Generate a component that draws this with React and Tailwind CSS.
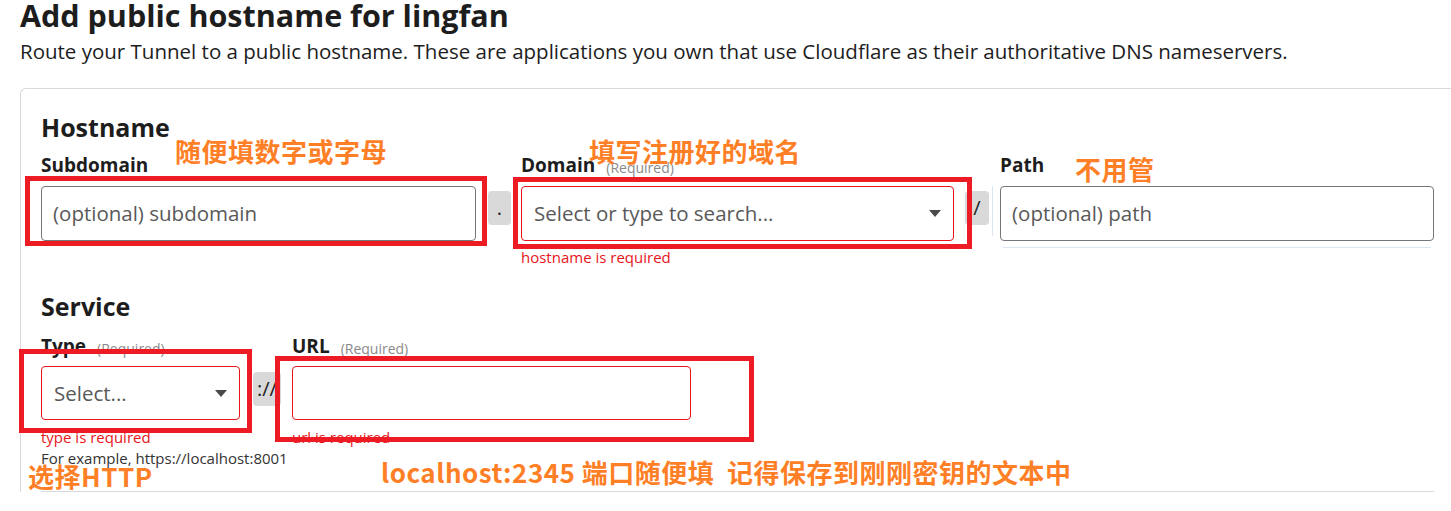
import React from "react";

const Caret = () => (
  <svg width="12" height="7" viewBox="0 0 12 7" className="shrink-0">
    <path d="M0 0h12L6 7z" fill="#4a4a4a" />
  </svg>
);

const Label = ({ children, required }) => (
  <div className="h-[34px] flex items-center gap-[11px]">
    <span className="text-[19px] font-bold text-[#1d1d1d]">{children}</span>
    {required && <span className="text-[14px] text-[#8a8a8a] mt-[4px]">(Required)</span>}
  </div>
);

const Sep = ({ children, w }) => (
  <div className={`${w} h-[34px] mt-[43px] rounded-[4px] bg-[#d9d9d9] flex items-center justify-center text-[20px] text-[#1d1d1d]`}>
    {children}
  </div>
);

const App = () => {
  return (
    <div className="relative w-[1451px] h-[511px] overflow-hidden bg-white text-[#1d1d1d] font-['Open_Sans','Noto_Sans',sans-serif]">
      {/* Page header */}
      <div className="pl-5">
        <h1 className="text-[30.5px] font-bold leading-[30px]">Add public hostname for lingfan</h1>
        <p className="mt-[6px] text-[20.5px] leading-[30px]">
          Route your Tunnel to a public hostname. These are applications you own that use Cloudflare as their authoritative DNS nameservers.
        </p>
      </div>

      {/* Card */}
      <div className="ml-5 mt-[22px] border border-[#d9d9d9] border-r-0 border-b-0 rounded-tl-[6px] pl-5 pr-[17px] pt-[24px]">
        <h2 className="text-[25px] font-bold leading-[28px]">Hostname</h2>
        <div className="mt-[7px] flex items-start">
          <div className="w-[435px]">
            <Label>Subdomain</Label>
            <div className="mt-[4px] h-[55px] rounded-[4px] border border-[#767676] flex items-center pl-[11px] text-[20.5px] text-[#595959]">
              (optional) subdomain
            </div>
          </div>
          <div className="ml-[12px]">
            <Sep w="w-[23px]">.</Sep>
          </div>
          <div className="ml-[10px] w-[433px]">
            <Label required>Domain</Label>
            <div className="mt-[4px] h-[55px] rounded-[4px] border border-[#e8141a] flex items-center justify-between pl-3 pr-[12px] text-[20.5px] text-[#595959]">
              <span>Select or type to search...</span>
              <Caret />
            </div>
            <div className="mt-[6px] text-[15px] leading-[20px] text-[#e8141a]">hostname is required</div>
          </div>
          <div className="ml-[11px]">
            <Sep w="w-[24px]">/</Sep>
          </div>
          <div className="ml-[3px] mt-[38px] w-px h-[50px] bg-[#dbe6f4]" />
          <div className="ml-[7px] w-[434px]">
            <Label>Path</Label>
            <div className="mt-[4px] h-[55px] rounded-[4px] border border-[#767676] flex items-center pl-[11px] text-[20.5px] text-[#595959]">
              (optional) path
            </div>
            <div className="mt-[6px] mx-[3px] h-px bg-[#dbe6f4]" />
          </div>
        </div>

        <h2 className="mt-[25px] text-[25px] font-bold leading-[28px]">Service</h2>
        <div className="mt-[9px] flex items-start">
          <div className="w-[199px]">
            <Label required>Type</Label>
            <div className="mt-[3px] h-[54px] rounded-[4px] border border-[#e8141a] flex items-center justify-between pl-3 pr-[12px] text-[20.5px] text-[#595959]">
              <span>Select...</span>
              <Caret />
            </div>
            <div className="mt-[7px] text-[15px] leading-[20px] text-[#e8141a]">type is required</div>
            <div className="mt-px text-[15px] leading-[20px] text-[#333] whitespace-nowrap">For example, https://localhost:8001</div>
          </div>
          <div className="ml-[13px]">
            <Sep w="w-[28px]">://</Sep>
          </div>
          <div className="ml-[11px] w-[399px]">
            <Label required>URL</Label>
            <div className="mt-[3px] h-[54px] rounded-[4px] border border-[#e8141a]" />
            <div className="mt-[7px] text-[15px] leading-[20px] text-[#e8141a]">url is required</div>
          </div>
        </div>
        <div className="mt-[23px] h-px bg-[#d9d9d9]" />
      </div>

      {/* Annotations drawn over the screenshot */}
      <div className="absolute left-[25px] top-[176px] w-[462px] h-[70px] border-[5px] border-[#ed1c24]" />
      <div className="absolute left-[513px] top-[177px] w-[459px] h-[72px] border-[5px] border-[#ed1c24]" />
      <div className="absolute left-[19px] top-[349px] w-[233px] h-[84px] border-[5px] border-[#ed1c24]" />
      <div className="absolute left-[275px] top-[356px] w-[479px] h-[86px] border-[5px] border-[#ed1c24]" />

      <div className="font-['Noto_Sans_CJK_SC',sans-serif] font-bold text-[26px] leading-[28px] tracking-[0.5px] text-[#ff7f27]">
        <div className="absolute left-[175px] top-[137px]">随便填数字或字母</div>
        <div className="absolute left-[589px] top-[137px]">填写注册好的域名</div>
        <div className="absolute left-[1075px] top-[155px]">不用管</div>
        <div className="absolute left-[28px] top-[462px]">选择HTTP</div>
        <div className="absolute left-[381px] top-[458px] whitespace-pre">localhost:2345 端口随便填  记得保存到刚刚密钥的文本中</div>
      </div>
    </div>
  );
};

export default App;
